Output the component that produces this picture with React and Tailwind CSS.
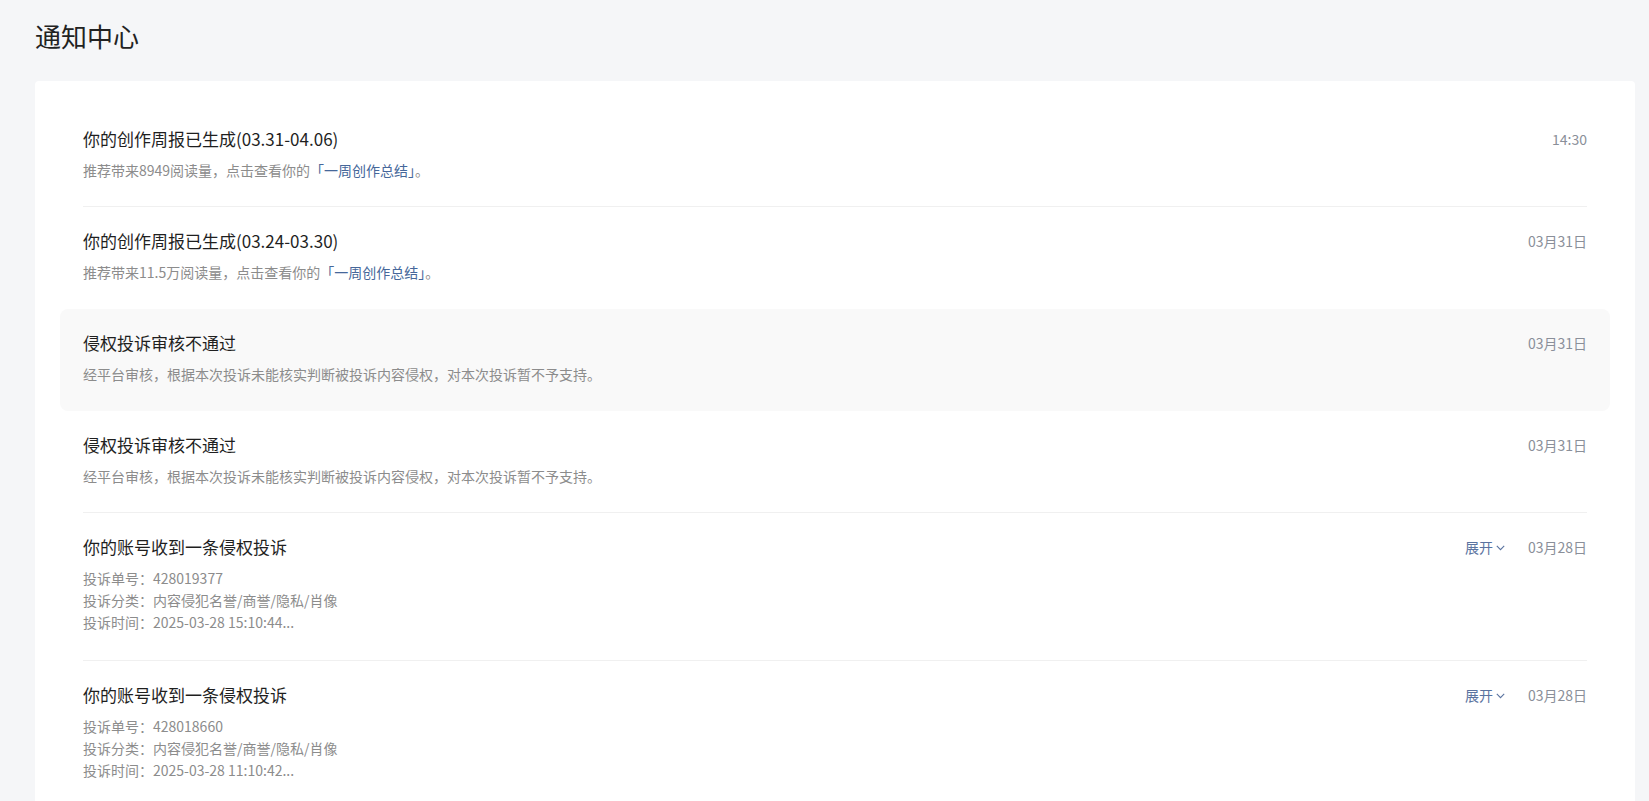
import React from "react";

const items = [
  {
    title: "你的创作周报已生成(03.31-04.06)",
    date: "14:30",
    type: "report",
    pre: "推荐带来8949阅读量，点击查看你的",
  },
  {
    title: "你的创作周报已生成(03.24-03.30)",
    date: "03月31日",
    type: "report",
    pre: "推荐带来11.5万阅读量，点击查看你的",
  },
  {
    title: "侵权投诉审核不通过",
    date: "03月31日",
    type: "text",
    hover: true,
    desc: "经平台审核，根据本次投诉未能核实判断被投诉内容侵权，对本次投诉暂不予支持。",
  },
  {
    title: "侵权投诉审核不通过",
    date: "03月31日",
    type: "text",
    desc: "经平台审核，根据本次投诉未能核实判断被投诉内容侵权，对本次投诉暂不予支持。",
  },
  {
    title: "你的账号收到一条侵权投诉",
    date: "03月28日",
    type: "detail",
    lines: ["投诉单号：428019377", "投诉分类：内容侵犯名誉/商誉/隐私/肖像", "投诉时间：2025-03-28 15:10:44..."],
  },
  {
    title: "你的账号收到一条侵权投诉",
    date: "03月28日",
    type: "detail",
    lines: ["投诉单号：428018660", "投诉分类：内容侵犯名誉/商誉/隐私/肖像", "投诉时间：2025-03-28 11:10:42..."],
  },
];

function Chevron() {
  return (
    <svg width="9" height="6" viewBox="0 0 9 6" fill="none" className="ml-[3px] mt-[1px]">
      <path d="M0.8 0.9 L4.5 4.6 L8.2 0.9" stroke="#5a73a0" strokeWidth="1.1" />
    </svg>
  );
}

function Item({ item, next }) {
  const showDivider = !item.hover && !(next && next.hover);
  return (
    <div className={item.hover ? "rounded-[8px] bg-[#f9f9f9] px-[23px]" : "px-[23px]"}>
      <div className={showDivider ? "border-b border-[#f0f0f0]" : "border-b border-transparent"}>
        <div className={item.type === "detail" ? "pt-[22px] pb-[27px]" : "pt-[22px] pb-[25px]"}>
          <div className="flex items-center justify-between h-[24px]">
            <div className="text-[17px] leading-[24px] text-[#1f1f1f]">{item.title}</div>
            <div className="flex items-center">
              {item.type === "detail" && (
                <div className="flex items-center mr-[23px] text-[14px] text-[#5a73a0]">
                  <span>展开</span>
                  <Chevron />
                </div>
              )}
              <div className="text-[14px] text-[#8a8f99]">{item.date}</div>
            </div>
          </div>
          {item.type === "report" && (
            <div className="mt-[8px] text-[14px] leading-[22px] text-[#8c8c8c]">
              {item.pre}
              <span className="text-[#46679a]">「一周创作总结」</span>。
            </div>
          )}
          {item.type === "text" && (
            <div className="mt-[8px] text-[14px] leading-[22px] text-[#8c8c8c]">{item.desc}</div>
          )}
          {item.type === "detail" && (
            <div className="mt-[8px] text-[14px] leading-[22px] text-[#8c8c8c]">
              {item.lines.map((l, i) => (
                <div key={i}>{l}</div>
              ))}
            </div>
          )}
        </div>
      </div>
    </div>
  );
}

export default function App() {
  return (
    <div
      className="min-h-screen bg-[#f5f6f8] pl-[35px] pr-[14px]"
      style={{ fontFamily: '"Noto Sans CJK SC", "Noto Sans", sans-serif' }}
    >
      <div className="pt-[18px] h-[81px] text-[26px] leading-[36px] text-[#222]">通知中心</div>
      <div className="bg-white rounded-[4px] px-[25px] pt-[24px] pb-[20px]">
        {items.map((it, i) => (
          <Item key={i} item={it} next={items[i + 1]} />
        ))}
      </div>
    </div>
  );
}
